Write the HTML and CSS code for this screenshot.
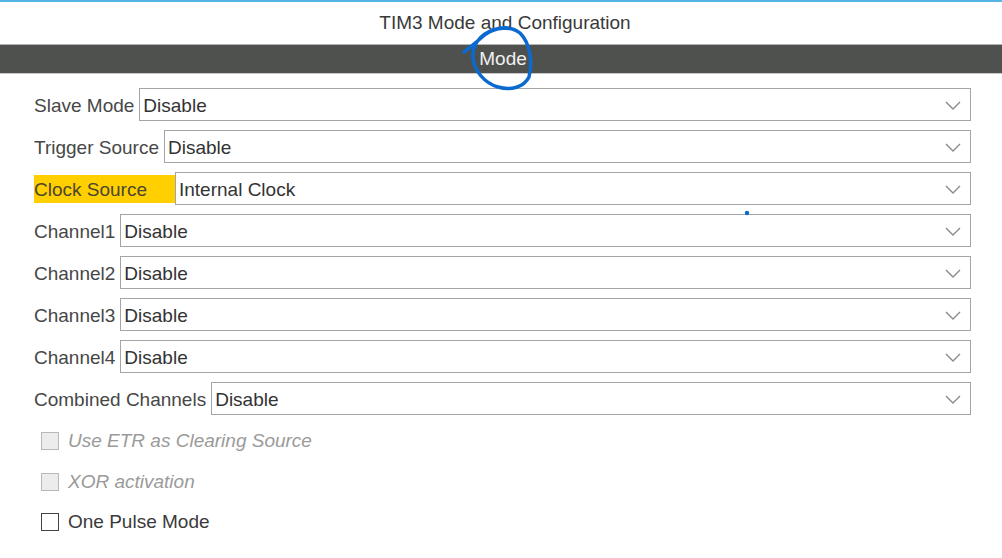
FILE: index.html
```html
<!DOCTYPE html>
<html>
<head>
<meta charset="utf-8">
<link rel="stylesheet" href="styles.css">
</head>
<body>
<div class="topline"></div>
<div class="title">TIM3 Mode and Configuration</div>
<div class="bar">Mode</div>
<div class="form">
  <div class="row"><span class="label">Slave Mode</span><div class="select"><span>Disable</span><svg class="chev" width="16" height="9" viewBox="0 0 16 9"><polyline points="1,1 8,8 15,1" /></svg></div></div>
  <div class="row"><span class="label">Trigger Source</span><div class="select"><span>Disable</span><svg class="chev" width="16" height="9" viewBox="0 0 16 9"><polyline points="1,1 8,8 15,1" /></svg></div></div>
  <div class="row"><span class="label hl">Clock Source</span><div class="select"><span>Internal Clock</span><svg class="chev" width="16" height="9" viewBox="0 0 16 9"><polyline points="1,1 8,8 15,1" /></svg></div></div>
  <div class="row"><span class="label">Channel1</span><div class="select"><span>Disable</span><svg class="chev" width="16" height="9" viewBox="0 0 16 9"><polyline points="1,1 8,8 15,1" /></svg></div></div>
  <div class="row"><span class="label">Channel2</span><div class="select"><span>Disable</span><svg class="chev" width="16" height="9" viewBox="0 0 16 9"><polyline points="1,1 8,8 15,1" /></svg></div></div>
  <div class="row"><span class="label">Channel3</span><div class="select"><span>Disable</span><svg class="chev" width="16" height="9" viewBox="0 0 16 9"><polyline points="1,1 8,8 15,1" /></svg></div></div>
  <div class="row"><span class="label">Channel4</span><div class="select"><span>Disable</span><svg class="chev" width="16" height="9" viewBox="0 0 16 9"><polyline points="1,1 8,8 15,1" /></svg></div></div>
  <div class="row"><span class="label">Combined Channels</span><div class="select"><span>Disable</span><svg class="chev" width="16" height="9" viewBox="0 0 16 9"><polyline points="1,1 8,8 15,1" /></svg></div></div>
  <div class="checks">
    <div class="check disabled"><span class="box"></span><span>Use ETR as Clearing Source</span></div>
    <div class="check disabled"><span class="box"></span><span>XOR activation</span></div>
    <div class="check"><span class="box"></span><span>One Pulse Mode</span></div>
  </div>
</div>
<svg class="annot" width="1002" height="558" viewBox="0 0 1002 558">
  <path d="M464,52 C469,49 476,42 486,34 C495,28 510,25 520,33 C530,43 533,62 529,77 C524,87 511,91 498,87 C484,83 474,70 473,58 C472,46 479,35 493,30 C499,28 504,27 508,28" />
  <circle cx="747" cy="213" r="2.2" />
</svg>
</body>
</html>
```

FILE: styles.css
```css
html, body {
  margin: 0;
  padding: 0;
  background: #ffffff;
  font-family: "Liberation Sans", Arial, sans-serif;
}

body {
  width: 1002px;
  height: 558px;
  position: relative;
  overflow: hidden;
}

.topline {
  height: 2px;
  background: #56b4e4;
}

.title {
  height: 42px;
  display: flex;
  align-items: center;
  justify-content: center;
  font-size: 19px;
  color: #3a3a3a;
  padding-left: 8px;
}

.bar {
  height: 28px;
  border-top: 1px solid #b4b4b4;
  border-bottom: 1px solid #c8c8c8;
  background: #4f514f;
  color: #f0f0f0;
  font-size: 19px;
  display: flex;
  align-items: center;
  justify-content: center;
  padding-left: 4px;
}

.form {
  padding: 14px 31px 0 34px;
}

.row {
  display: flex;
  align-items: center;
  height: 33px;
  margin-bottom: 9px;
}

.label {
  font-size: 19px;
  color: #474747;
  margin-right: 5px;
  white-space: nowrap;
  height: 28px;
  padding-top: 2px;
  box-sizing: border-box;
  display: flex;
  align-items: center;
}

.label.hl {
  background: #ffcf00;
  width: 141px;
  margin-right: 0;
  color: #4a4530;
}

.select {
  flex: 1;
  height: 33px;
  box-sizing: border-box;
  border: 1.5px solid #a2a6aa;
  display: flex;
  align-items: center;
  justify-content: space-between;
  padding: 2px 9px 0 3px;
  font-size: 19px;
  color: #333333;
}

.chev {
  fill: none;
  stroke: #8a8a8a;
  stroke-width: 1.4;
}

.checks {
  padding-left: 7px;
}

.check {
  display: flex;
  align-items: center;
  height: 34px;
  margin-bottom: 6.5px;
  font-size: 19px;
  color: #3a3a3a;
}

.check .box {
  width: 16px;
  height: 16px;
  border: 1px solid #444444;
  background: #ffffff;
  margin-right: 9px;
  flex: none;
}

.check.disabled {
  color: #9a9a9a;
  font-style: italic;
}

.check.disabled .box {
  border-color: #b8b8b8;
  background: #ececec;
}

.annot {
  position: absolute;
  left: 0;
  top: 0;
  pointer-events: none;
}

.annot path {
  fill: none;
  stroke: #0a6ad0;
  stroke-width: 3.5;
  stroke-linecap: round;
  stroke-linejoin: round;
}

.annot circle {
  fill: #0a6ad0;
}
```
